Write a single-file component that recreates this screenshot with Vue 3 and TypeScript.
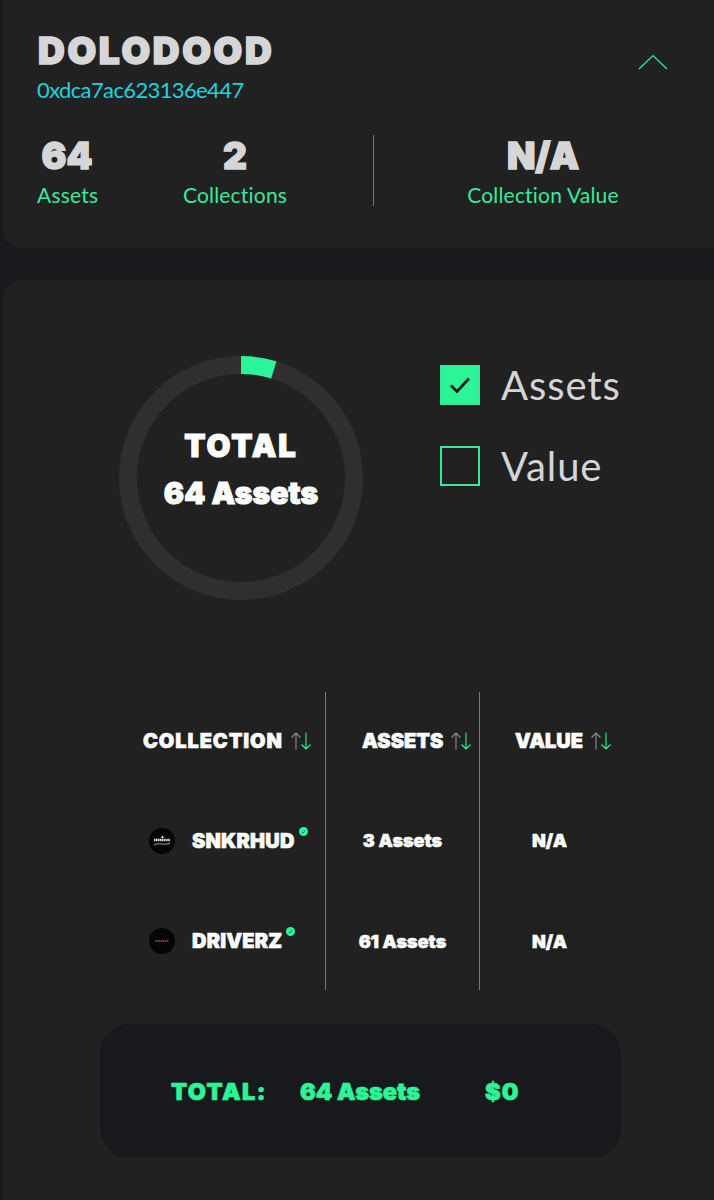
<script setup lang="ts">
interface Row {
  name: string;
  assets: number;
  value: string;
  logo: "snkr" | "driver";
}

const rows: Row[] = [
  { name: "SNKRHUD", assets: 3, value: "N/A", logo: "snkr" },
  { name: "DRIVERZ", assets: 61, value: "N/A", logo: "driver" },
];

const total = 64;
const radius = 113;
const circ = 2 * Math.PI * radius;
// first slice only, same as the chart in the page
const slice = (rows[0].assets / total) * circ;
</script>

<template>
  <div class="page">
    <section class="card head">
      <div class="title-row">
        <div>
          <h1 class="name">DOLODOOD</h1>
          <div class="addr">0xdca7ac623136e447</div>
        </div>
        <svg class="chevron" width="30" height="16" viewBox="0 0 30 16">
          <path d="M1 15 L15 1.5 L29 15" fill="none" stroke="#2cf598" stroke-width="1.2" />
        </svg>
      </div>
      <div class="stats">
        <div class="stat s1">
          <div class="num">64</div>
          <div class="lbl">Assets</div>
        </div>
        <div class="stat s2">
          <div class="num">2</div>
          <div class="lbl">Collections</div>
        </div>
        <div class="divider"></div>
        <div class="stat s3">
          <div class="num">N/A</div>
          <div class="lbl">Collection Value</div>
        </div>
      </div>
    </section>

    <section class="card body">
      <div class="chart-row">
        <div class="chart">
          <svg width="244" height="244" viewBox="0 0 244 244">
            <circle cx="122" cy="122" :r="radius" fill="none" stroke="#2f2f2f" stroke-width="18" />
            <circle
              cx="122"
              cy="122"
              :r="radius"
              fill="none"
              stroke="#2cf598"
              stroke-width="18"
              :stroke-dasharray="`${slice} ${circ - slice}`"
              transform="rotate(-90 122 122)"
            />
          </svg>
          <div class="chart-text">
            <div class="chart-total">TOTAL</div>
            <div class="chart-assets">{{ total }} Assets</div>
          </div>
        </div>
        <div class="legend">
          <div class="legend-item">
            <span class="box checked">
              <svg width="22" height="18" viewBox="0 0 22 18">
                <path d="M2 9.5 L8 15.5 L20 2.5" fill="none" stroke="#1b1c1e" stroke-width="2.8" />
              </svg>
            </span>
            <span>Assets</span>
          </div>
          <div class="legend-item">
            <span class="box"></span>
            <span>Value</span>
          </div>
        </div>
      </div>

      <div class="table">
        <div class="col col-name">
          <div class="cell th">
            COLLECTION
            <svg class="sort" width="20" height="18" viewBox="0 0 20 18">
              <path d="M5 17.5 V1 M0.5 5.5 L5 1 L9.5 5.5" fill="none" stroke="#8f8f8f" stroke-width="1.1" />
              <path d="M15 0.5 V17 M10.5 12.5 L15 17 L19.5 12.5" fill="none" stroke="#2cf598" stroke-width="1.1" />
            </svg>
          </div>
          <div v-for="row in rows" :key="row.name" class="cell td-name">
            <svg class="logo" width="26" height="26" viewBox="0 0 26 26">
              <circle cx="13" cy="13" r="13" fill="#050505" />
              <template v-if="row.logo === 'snkr'">
                <path d="M5 12 H21" stroke="#e8e8e8" stroke-width="2.4" stroke-dasharray="1.4 .5" />
                <path d="M12 10 L13.5 7.5 L15 10" fill="#e8e8e8" />
                <path d="M5 17 C10 14 15 18 21 15" fill="none" stroke="#cfcfcf" stroke-width=".8" />
              </template>
              <path v-else d="M6 13 H20" stroke="#7c3a3a" stroke-width="2" stroke-dasharray="1.4 .6" />
            </svg>
            <span class="row-name">{{ row.name }}</span>
            <svg class="badge" width="9" height="9" viewBox="0 0 9 9">
              <circle cx="4.5" cy="4.5" r="4.5" fill="#2cf598" />
              <path d="M2.8 4.8 L4 6 L6.2 3.2" fill="none" stroke="#17804f" stroke-width="1" />
            </svg>
          </div>
        </div>
        <div class="col col-assets">
          <div class="cell th">
            ASSETS
            <svg class="sort" width="20" height="18" viewBox="0 0 20 18">
              <path d="M5 17.5 V1 M0.5 5.5 L5 1 L9.5 5.5" fill="none" stroke="#8f8f8f" stroke-width="1.1" />
              <path d="M15 0.5 V17 M10.5 12.5 L15 17 L19.5 12.5" fill="none" stroke="#2cf598" stroke-width="1.1" />
            </svg>
          </div>
          <div v-for="row in rows" :key="row.name" class="cell td">{{ row.assets }} Assets</div>
        </div>
        <div class="col col-value">
          <div class="cell th">
            VALUE
            <svg class="sort" width="20" height="18" viewBox="0 0 20 18">
              <path d="M5 17.5 V1 M0.5 5.5 L5 1 L9.5 5.5" fill="none" stroke="#8f8f8f" stroke-width="1.1" />
              <path d="M15 0.5 V17 M10.5 12.5 L15 17 L19.5 12.5" fill="none" stroke="#2cf598" stroke-width="1.1" />
            </svg>
          </div>
          <div v-for="row in rows" :key="row.name" class="cell td">{{ row.value }}</div>
        </div>
      </div>

      <div class="summary">
        <span class="sum-label">TOTAL:</span>
        <span class="sum-assets">{{ total }} Assets</span>
        <span class="sum-value">$0</span>
      </div>
    </section>
  </div>
</template>

<style>
html,
body {
  background: #18191c;
}
</style>

<style scoped>
.page {
  width: 714px;
  height: 1200px;
  overflow: hidden;
  background: #18191c;
  font-family: Lato, "Liberation Sans", sans-serif;
}
.card {
  background: #212121;
  margin-left: 3px;
  width: 731px;
  box-sizing: border-box;
}
.head {
  height: 248px;
  border-radius: 0 0 18px 18px;
  padding: 28px 0 0 34px;
}
.title-row {
  display: flex;
  justify-content: space-between;
  width: 631px;
}
.name {
  margin: 0 0 0 1px;
  font-family: Inter, sans-serif;
  font-size: 37px;
  font-weight: 900;
  line-height: 45px;
  letter-spacing: 2.7px;
  color: #d6d6d8;
  -webkit-text-stroke: 1.6px #d6d6d8;
}
.addr {
  font-size: 22px;
  line-height: 28px;
  margin-top: 3px;
  letter-spacing: -0.62px;
  color: #1fd3dc;
}
.chevron {
  margin-top: 26px;
}
.stats {
  display: flex;
  margin-top: 31px;
  height: 71px;
}
.stat {
  text-align: center;
}
.num {
  font-family: Inter, sans-serif;
  font-size: 37px;
  font-weight: 900;
  line-height: 42px;
  color: #d6d6d8;
  -webkit-text-stroke: 1.4px #d6d6d8;
}
.lbl {
  font-size: 21px;
  line-height: 26px;
  margin-top: 5px;
  letter-spacing: 0.2px;
  color: #37ea9b;
  white-space: nowrap;
}
.s1 {
  width: 60px;
}
.s2 {
  width: 106px;
  margin-left: 85px;
}
.divider {
  width: 1px;
  background: #77787a;
  margin-left: 85px;
}
.s3 {
  width: 156px;
  margin-left: 91px;
}
.body {
  margin-top: 32px;
  height: 940px;
  border-radius: 18px 18px 0 0;
  padding-top: 76px;
}
.chart-row {
  display: flex;
  padding-left: 116px;
}
.chart {
  position: relative;
  width: 244px;
  height: 244px;
}
.chart svg {
  display: block;
}
.chart-text {
  position: absolute;
  inset: 0;
  display: flex;
  flex-direction: column;
  align-items: center;
  justify-content: center;
  padding-bottom: 12px;
  box-sizing: border-box;
  color: #fff;
  font-family: Inter, sans-serif;
  font-weight: 900;
  -webkit-text-stroke: 1.1px #fff;
}
.chart-total {
  font-size: 31px;
  line-height: 42px;
  letter-spacing: 1.9px;
}
.chart-assets {
  font-size: 30px;
  line-height: 52px;
  white-space: nowrap;
  letter-spacing: 0.1px;
}
.legend {
  margin: 9px 0 0 77px;
}
.legend-item {
  display: flex;
  align-items: center;
  gap: 21px;
  height: 40px;
  margin-bottom: 41px;
  font-size: 40px;
  letter-spacing: 0.9px;
  color: #d5d5d8;
}
.box {
  width: 40px;
  height: 40px;
  box-sizing: border-box;
  border: 2px solid #37ea9b;
  display: flex;
  align-items: center;
  justify-content: center;
}
.box.checked {
  background: #2cf598;
}
.table {
  display: grid;
  grid-template-columns: 322px 154px 1fr;
  margin-top: 92px;
  height: 298px;
  color: #fff;
  font-family: Inter, sans-serif;
  font-weight: 900;
}
.col {
  display: grid;
  grid-template-rows: 97px 103px 98px;
}
.col-assets,
.col-value {
  border-left: 1px solid #7b7b7b;
}
.col-assets {
  border-right: 1px solid #7b7b7b;
  width: 155px;
  box-sizing: border-box;
}
.cell {
  display: flex;
  align-items: center;
}
.th {
  font-size: 20px;
  white-space: nowrap;
  -webkit-text-stroke: 0.6px #fff;
}
.sort {
  margin-left: 8px;
  flex: none;
}
.col-name .th {
  padding-left: 140px;
  letter-spacing: 0.9px;
}
.col-assets .th {
  padding-left: 36px;
}
.col-value .th {
  padding-left: 35px;
}
.td-name {
  padding-left: 146px;
  position: relative;
}
.logo {
  flex: none;
}
.row-name {
  font-size: 20px;
  margin-left: 17px;
  letter-spacing: 0.2px;
  -webkit-text-stroke: 0.6px #fff;
}
.badge {
  flex: none;
  margin: -19px 0 0 4px;
}
.td {
  font-size: 18px;
  -webkit-text-stroke: 0.5px #fff;
}
.col-assets .td {
  justify-content: center;
}
.col-value .td {
  padding-left: 52px;
}
.summary {
  display: flex;
  align-items: center;
  width: 521px;
  height: 134px;
  margin: 34px 0 0 97px;
  box-sizing: border-box;
  padding-left: 71px;
  border-radius: 30px;
  background: #18191c;
  color: #2cf598;
  font-family: Inter, sans-serif;
  font-size: 23.5px;
  font-weight: 900;
  -webkit-text-stroke: 0.7px #2cf598;
}
.sum-label {
  width: 129px;
  letter-spacing: 1.4px;
}
.sum-assets {
  width: 185px;
}
.sum-value {
  letter-spacing: 1px;
}
</style>
